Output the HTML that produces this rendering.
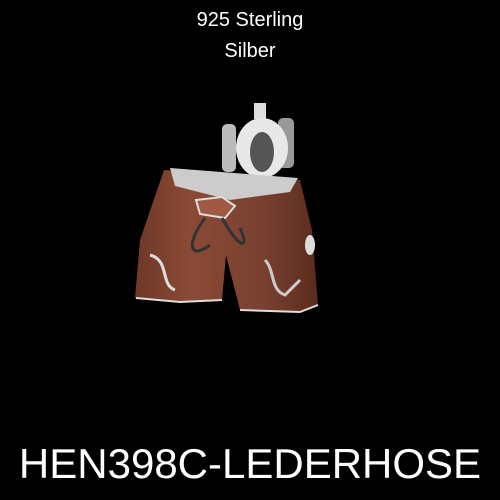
<!DOCTYPE html>
<html><head><style>
html,body{margin:0;padding:0;background:#000;width:500px;height:500px;overflow:hidden}
.t{position:absolute;left:0;width:500px;text-align:center;color:#fff;font-family:"Liberation Sans",sans-serif}
</style></head><body>
<div class="t" style="top:5px;font-size:20px;line-height:31px">925 Sterling<br>Silber</div>
<svg style="position:absolute;left:0;top:0" width="500" height="500">
<defs>
<linearGradient id="b" x1="0" y1="0" x2="1" y2="0">
<stop offset="0" stop-color="#6e3826"/><stop offset=".3" stop-color="#8a4a35"/><stop offset=".7" stop-color="#7a4030"/><stop offset="1" stop-color="#5a2c1e"/></linearGradient>
</defs>
<rect x="222" y="124" width="14" height="48" rx="5" fill="#bbb"/>
<rect x="278" y="118" width="16" height="50" rx="5" fill="#999"/>
<rect x="254" y="103" width="12" height="16" fill="#ddd"/>
<ellipse cx="262" cy="148" rx="26" ry="30" fill="#e8e8e8"/>
<ellipse cx="262" cy="152" rx="12" ry="20" fill="#555"/>
<path d="M164 170 L300 180 L312 230 L318 305 L300 312 L240 310 L226 255 L222 300 L180 302 L135 298 L140 240 Z" fill="url(#b)"/>
<path d="M170 168 L298 178 L290 192 L230 200 L175 186 Z" fill="#ccc"/>
<path d="M196 200 L222 197 L235 206 L225 218 L200 214 Z" fill="#a05a44" stroke="#ddd" stroke-width="2"/>
<path d="M205 218 C185 245 190 260 210 245 M222 218 C240 250 250 250 240 228" stroke="#333" stroke-width="3" fill="none"/>
<path d="M150 255 C170 260 160 285 175 290" stroke="#ddd" stroke-width="3" fill="none"/>
<path d="M265 260 C275 270 270 290 285 295 L300 280" stroke="#ccc" stroke-width="3" fill="none"/>
<path d="M136 298 L180 302 L222 300 M240 310 L300 312 L318 305" stroke="#ddd" stroke-width="2" fill="none"/>
<ellipse cx="310" cy="245" rx="5" ry="10" fill="#ddd"/>
</svg>
<div class="t" style="top:440px;font-size:42px;line-height:48px">HEN398C-LEDERHOSE</div>
</body></html>
